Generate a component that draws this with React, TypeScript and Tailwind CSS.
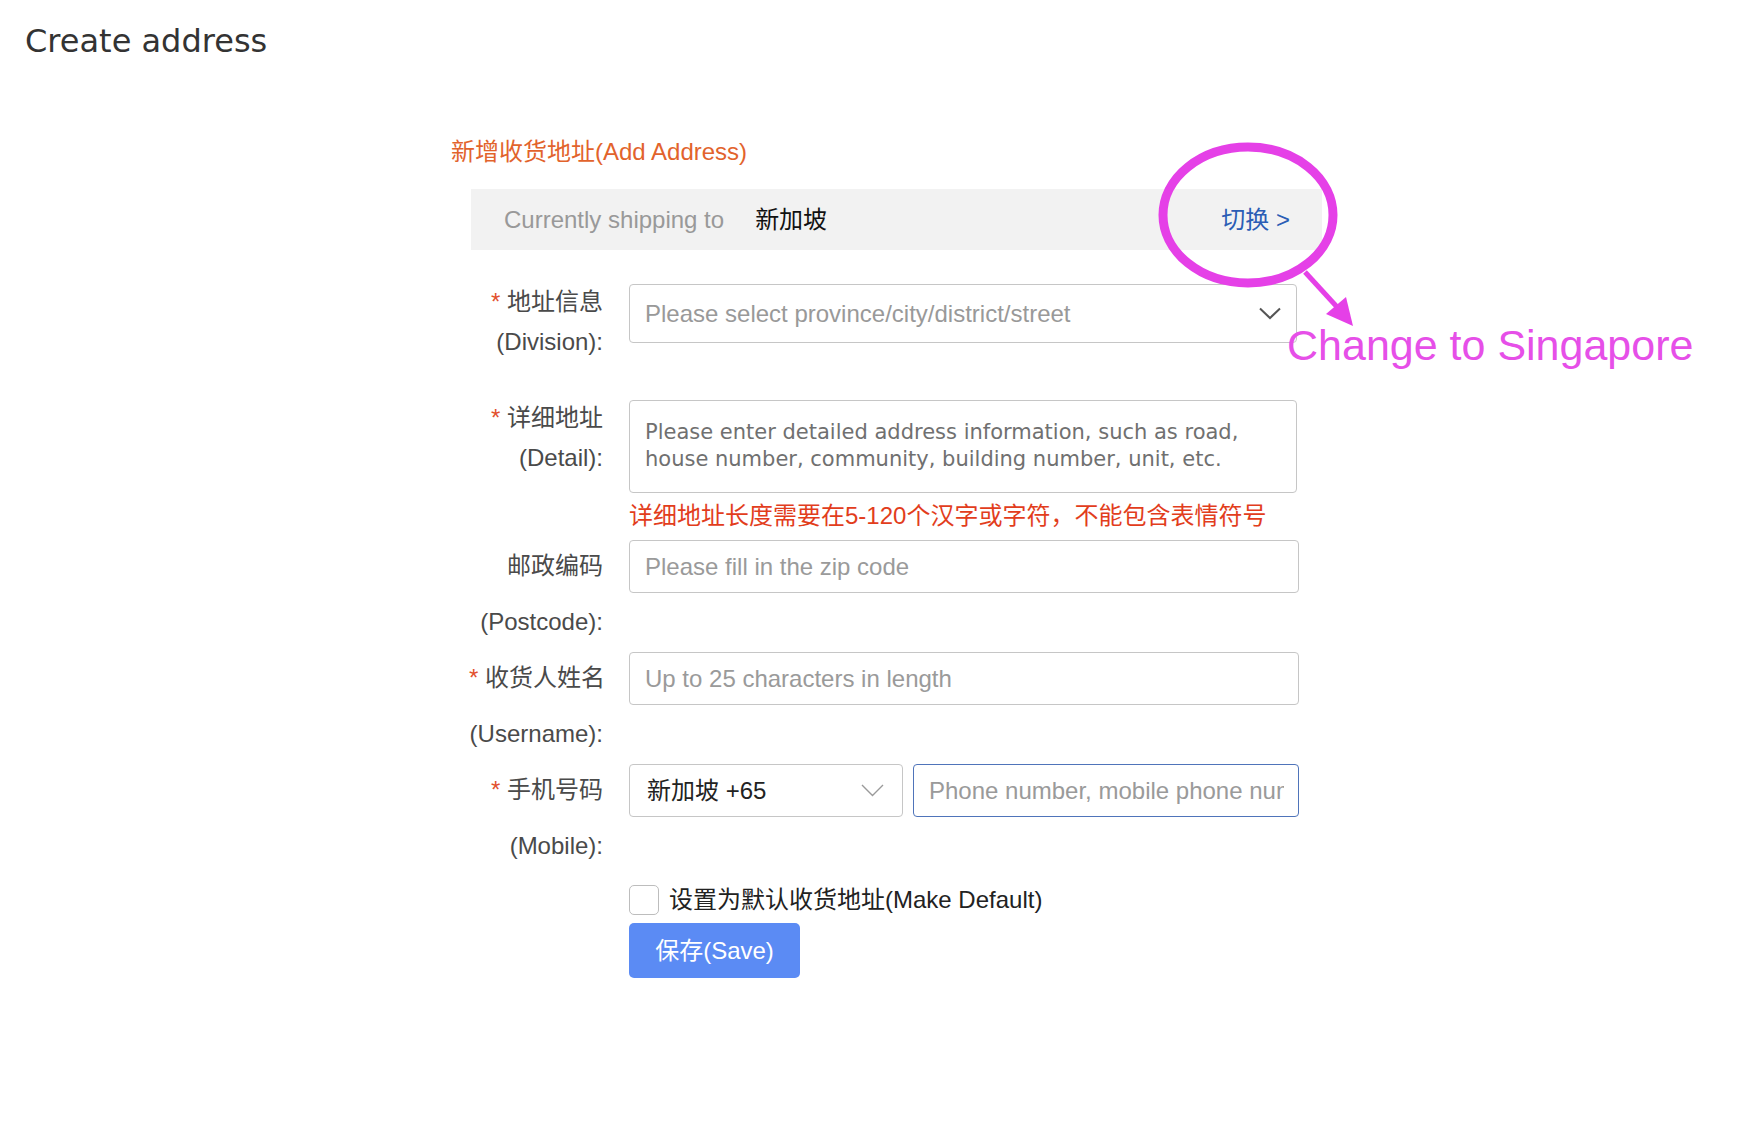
import type { ReactNode } from "react";

function FieldLabel({
  required,
  zh,
  en,
  lineClass,
}: {
  required?: boolean;
  zh: string;
  en: string;
  lineClass: string;
}) {
  return (
    <div className={`w-[134px] shrink-0 whitespace-nowrap text-right text-[24px] text-[#4a4a4a] ${lineClass}`}>
      <div>
        {required && <span className="text-[#e2502e]">* </span>}
        {zh}
      </div>
      <div>({en}):</div>
    </div>
  );
}

function Row({ children, className = "" }: { children: ReactNode; className?: string }) {
  return <div className={`flex gap-[26px] ${className}`}>{children}</div>;
}

function Chevron({ light }: { light?: boolean }) {
  if (light) {
    return (
      <svg width="23" height="13" viewBox="0 0 23 13" fill="none">
        <polyline points="1,1 11.5,11.5 22,1" stroke="#9a9a9a" strokeWidth="1.4" />
      </svg>
    );
  }
  return (
    <svg width="22" height="13" viewBox="0 0 22 13" fill="none">
      <polyline points="1,1.5 11,11 21,1.5" stroke="#555" strokeWidth="2" />
    </svg>
  );
}

const inputBase =
  "h-[53px] rounded-[4px] border bg-white pl-[15px] pr-[14px] text-[24px] text-[#222] outline-none placeholder:text-[#9a9a9a]";

export default function App() {
  return (
    <div className="relative min-h-[1122px] w-full overflow-hidden bg-white font-['Liberation_Sans','Noto_Sans_CJK_SC',sans-serif]">
      <h1 className="pl-[25px] pt-[21px] font-['DejaVu_Sans',sans-serif] text-[32px] leading-[40px] font-normal text-[#333]">
        Create address
      </h1>

      <div className="ml-[451px] mt-[79px] w-[871px]">
        <div className="text-[24px] leading-[24px] text-[#e2632c]">新增收货地址(Add Address)</div>

        <div className="ml-[20px] mt-[25px] flex h-[61px] w-[851px] items-center justify-between bg-[#f2f2f2] pl-[33px] pr-[32px] text-[24px]">
          <div className="flex items-center">
            <span className="text-[#999]">Currently shipping to</span>
            <span className="ml-[31px] text-[#111]">新加坡</span>
          </div>
          <span className="text-[#2b5db5]">切换 &gt;</span>
        </div>

        <div className="ml-[18px]">
          <Row className="mt-[32px]">
            <FieldLabel required zh="地址信息" en="Division" lineClass="leading-[40px]" />
            <div className="mt-[2px] flex h-[59px] w-[668px] items-center justify-between rounded-[4px] border border-[#c6c6c6] pl-[15px] pr-[15px] text-[24px] text-[#999]">
              <span>Please select province/city/district/street</span>
              <Chevron />
            </div>
          </Row>

          <Row className="mt-[36px]">
            <FieldLabel required zh="详细地址" en="Detail" lineClass="leading-[40px]" />
            <textarea
              className="mt-[2px] h-[93px] w-[668px] resize-none rounded-[4px] border border-[#c6c6c6] pl-[15px] pr-[20px] pt-[18px] font-['DejaVu_Sans',sans-serif] text-[21px] leading-[27px] outline-none placeholder:text-[#707070]"
              placeholder="Please enter detailed address information, such as road, house number, community, building number, unit, etc."
            />
          </Row>

          <div className="ml-[160px] mt-[11px] text-[24px] leading-[24px] text-[#e23d1c]">
            详细地址长度需要在5-120个汉字或字符，不能包含表情符号
          </div>

          <Row className="mt-[10px]">
            <FieldLabel zh="邮政编码" en="Postcode" lineClass="leading-[56px]" />
            <input
              className={`${inputBase} mt-[2px] w-[670px] border-[#c6c6c6]`}
              placeholder="Please fill in the zip code"
            />
          </Row>

          <Row>
            <FieldLabel required zh="收货人姓名" en="Username" lineClass="leading-[56px]" />
            <input
              className={`${inputBase} mt-[2px] w-[670px] border-[#c6c6c6]`}
              placeholder="Up to 25 characters in length"
            />
          </Row>

          <Row>
            <FieldLabel required zh="手机号码" en="Mobile" lineClass="leading-[56px]" />
            <div className="mt-[2px] flex gap-[10px]">
              <div className="flex h-[53px] w-[274px] items-center justify-between rounded-[4px] border border-[#c6c6c6] pl-[17px] pr-[18px] text-[24px] text-[#222]">
                <span>新加坡 +65</span>
                <Chevron light />
              </div>
              <input
                className={`${inputBase} w-[386px] border-[#4f74ba]`}
                placeholder="Phone number, mobile phone number"
              />
            </div>
          </Row>

          <div className="ml-[160px] mt-[11px] flex items-center">
            <span className="h-[30px] w-[30px] rounded-[5px] border border-[#bdbdbd] bg-white" />
            <span className="ml-[10px] text-[24px] leading-[30px] text-[#222]">设置为默认收货地址(Make Default)</span>
          </div>

          <button className="ml-[160px] mt-[8px] h-[55px] w-[171px] rounded-[5px] bg-[#5b8bf4] text-[24px] text-white">
            保存(Save)
          </button>
        </div>
      </div>

      {/* annotation overlay */}
      <svg
        className="pointer-events-none absolute left-0 top-0"
        width="1752"
        height="1122"
        viewBox="0 0 1752 1122"
        fill="none"
      >
        <ellipse cx="1248" cy="215" rx="85" ry="68" stroke="#e540e7" strokeWidth="9" />
        <line x1="1305" y1="272" x2="1338" y2="308" stroke="#e540e7" strokeWidth="5" />
        <polygon points="1353,326 1326,314 1346,297" fill="#e540e7" />
      </svg>
      <div className="pointer-events-none absolute left-[1287px] top-[324px] whitespace-nowrap text-[43px] leading-[43px] text-[#e64fe8]">
        Change to Singapore
      </div>
    </div>
  );
}
